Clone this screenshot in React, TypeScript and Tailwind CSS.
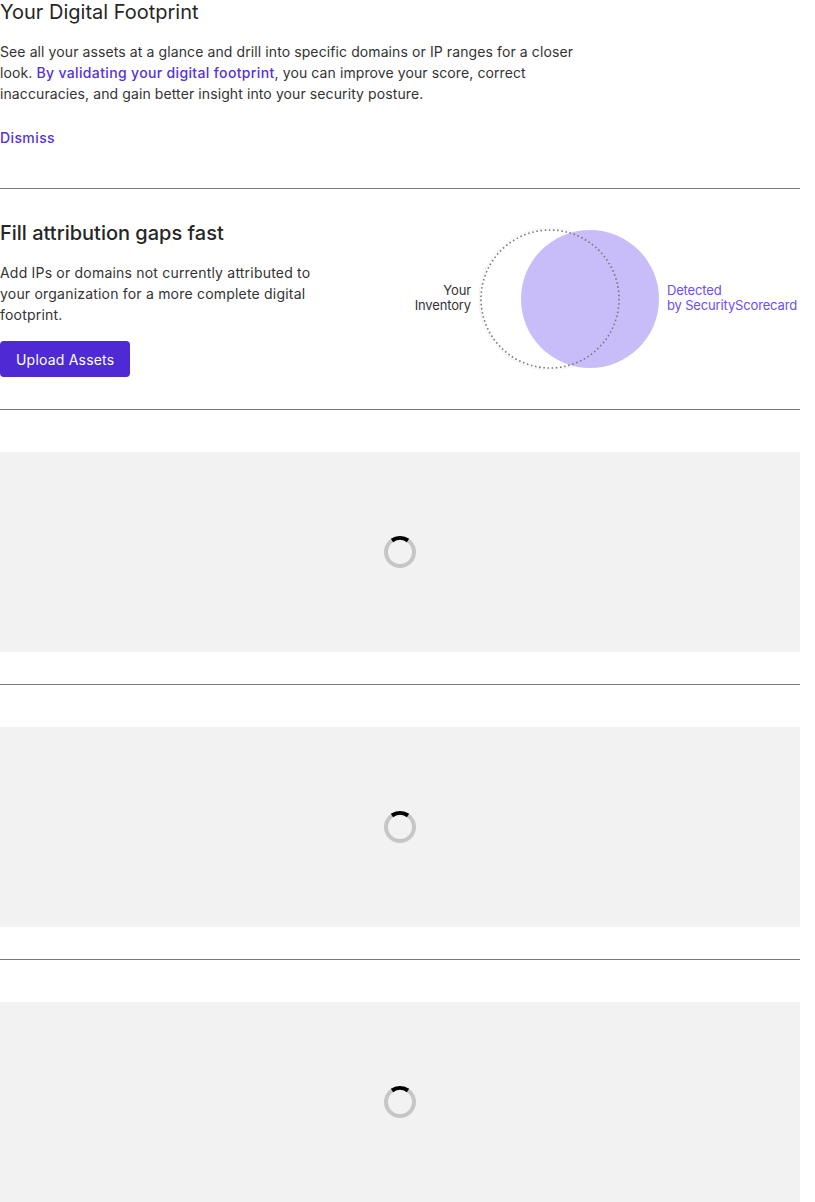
import React from 'react';

const Spinner: React.FC = () => (
  <svg width="36" height="36" viewBox="0 0 36 36">
    <circle cx="18" cy="18" r="14" fill="none" stroke="#c6c6c6" strokeWidth="4" />
    <path d="M 10 6.5 A 14 14 0 0 1 26 6.5" fill="none" stroke="#000" strokeWidth="4" />
  </svg>
);

const LoadingSection: React.FC = () => (
  <section className="pt-[42px] pb-[32px] border-b border-[#777]">
    <div className="h-[200px] bg-[#f2f2f2] flex items-center justify-center">
      <Spinner />
    </div>
  </section>
);

export default function App() {
  return (
    <div className="w-[800px] bg-white text-[#262626]" style={{ fontFamily: 'Inter, "Noto Sans", sans-serif' }}>
      {/* Intro */}
      <section className="pb-[40px] border-b border-[#777]">
        <h1 className="text-[20px] leading-6 font-normal">Your Digital Footprint</h1>
        <p className="mt-[17px] max-w-[585px] text-[14px] leading-[21px] tracking-[0.1px] text-[#333]">
          See all your assets at a glance and drill into specific domains or IP ranges for a closer look.{' '}
          <a className="text-[#5332dc] font-medium tracking-[0.35px]">By validating your digital footprint</a>, you can improve your score, correct
          inaccuracies, and gain better insight into your security posture.
        </p>
        <button className="mt-[23px] block text-[14px] leading-[21px] font-medium tracking-[0.4px] text-[#5332dc]">Dismiss</button>
      </section>

      {/* Attribution gaps */}
      <section className="pt-[32px] pb-[32px] border-b border-[#777] flex items-center">
        <div className="w-[330px]">
          <h2 className="text-[20px] leading-6 font-medium">Fill attribution gaps fast</h2>
          <p className="mt-[17px] text-[14px] leading-[21px] tracking-[0.2px] text-[#333]">
            Add IPs or domains not currently attributed to your organization for a more complete digital footprint.
          </p>
          <button className="mt-[16px] h-9 px-4 rounded bg-[#4d2ad4] text-white text-[14px] tracking-[0.2px]">Upload Assets</button>
        </div>
        <div className="ml-auto flex items-center mr-[3px]">
          <div className="-mt-[2px] text-right text-[13px] leading-[15px] tracking-[-0.15px] text-[#333]">
            <div>Your</div>
            <div>Inventory</div>
          </div>
          <svg width="184" height="142" viewBox="0 0 184 142" className="ml-[6px]">
            <circle cx="73" cy="71" r="71" fill="none" stroke="#f2f2f2" strokeWidth="1" />
            <circle cx="113" cy="71" r="69" fill="#c8bdf9" />
            <circle
              cx="73"
              cy="71"
              r="69"
              fill="none"
              stroke="#7a7a7a"
              strokeWidth="1.6"
              strokeDasharray="1.6 2.6"
            />
          </svg>
          <div className="-mt-[2px] ml-[6px] text-[13px] leading-[15px] tracking-[-0.15px] text-[#6c4ef4]">
            <div>Detected</div>
            <div>by SecurityScorecard</div>
          </div>
        </div>
      </section>

      <LoadingSection />
      <LoadingSection />
      <section className="pt-[42px]">
        <div className="h-[200px] bg-[#f2f2f2] flex items-center justify-center">
          <Spinner />
        </div>
      </section>
    </div>
  );
}
